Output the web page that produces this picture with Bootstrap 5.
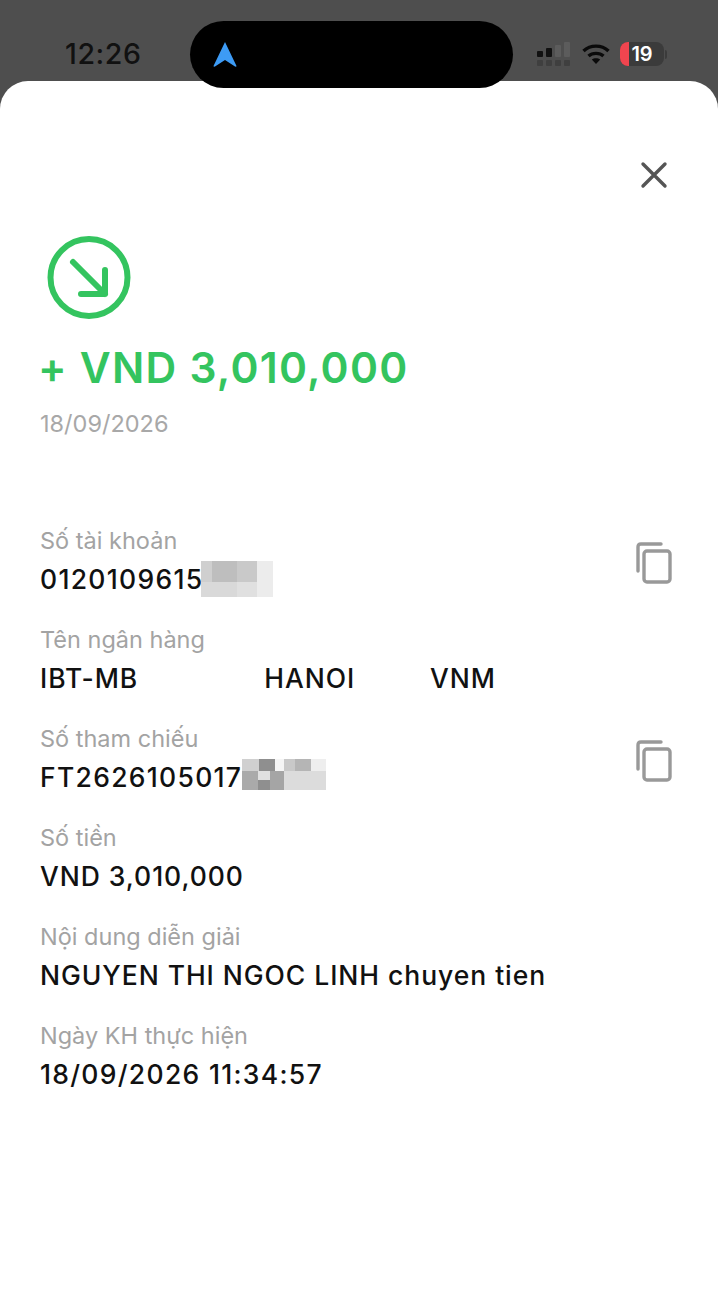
<!DOCTYPE html>
<html lang="vi">
<head>
  <meta charset="UTF-8">
  <title>Chi tiết giao dịch</title>
  <link href="https://cdn.jsdelivr.net/npm/bootstrap@5.3.0/dist/css/bootstrap.min.css" rel="stylesheet">
  <style>
    html, body { height: 1302px; overflow: hidden; }
    body { background: #4e4e4e; font-family: Inter, "Noto Sans", sans-serif; color: #111; }
    .status-bar { height: 81px; padding: 34px 51px 0 65px; position: relative; }
    .status-time { font-size: 28.500px; line-height: 40px; font-weight: 500; color: #111; width: 125px; letter-spacing: .6px; }
    .island { position: absolute; left: 190px; top: 21px; width: 323px; height: 67px; background: #000; border-radius: 34px; z-index: 2; }
    .island svg { position: absolute; left: 22px; top: 20px; }
    .status-icons { margin-left: auto; height: 40px; }
    .sig-icon { margin-right: 11px; }
    .wifi-icon { margin-right: 10px; }
    .batt { width: 44px; height: 24px; border-radius: 8px; background: #3b3b3b; overflow: hidden; color: #fff; font-size: 20px; font-weight: 600; line-height: 24px; text-align: center; position: relative; }
    .batt::before { content: ""; position: absolute; left: 0; top: 0; bottom: 0; width: 9px; background: #f0454f; }
    .batt-nub { width: 2px; height: 9px; margin-left: 1px; background: #3b3b3b; border-radius: 0 2px 2px 0; }
    .sheet { background: #fff; border-radius: 28px 28px 0 0; height: 1221px; padding: 0 40px; }
    .close-row { padding-top: 80px; padding-right: 10px; height: 155px; }
    .tx-amount { font-size: 42.500px; line-height: 50px; font-weight: 600; color: #34c45f; margin: 0 0 0 -2px; letter-spacing: 1.250px; }
    .tx-date { font-size: 23.500px; line-height: 30px; color: #a8a8a8; margin-top: 16px; }
    .tx-icon { height: 84px; margin-left: 7px; margin-bottom: 23px; }
    .info-list { margin-top: 87px; }
    .info-row { height: 99px; padding-right: 5px; }
    .info-label { font-size: 23.500px; line-height: 30px; color: #a3a3a3; }
    .info-value { font-size: 26.500px; line-height: 38px; font-weight: 500; color: #111; white-space: nowrap; letter-spacing: .95px; margin-top: 4px; }
    .info-value.info-nums { letter-spacing: 1.300px; }
    .bank-gap-1 { margin-left: 126px; }
    .bank-gap-2 { margin-left: 75px; }
    .mosaic { vertical-align: top; }
    .copy-icon { margin-top: 16px; }
  </style>
</head>
<body>
  <div class="status-bar d-flex">
    <div class="status-time">12:26</div>
    <div class="island">
      <svg width="26" height="27" viewBox="0 0 26 27"><path d="M13 1 L24.500 25 Q24.500 26 23 25.500 L13 19 L3 25.500 Q1.500 26 1.500 25 Z" fill="#3d9bf5"/></svg>
    </div>
    <div class="status-icons d-flex align-items-center">
      <svg class="sig-icon" width="34" height="24" viewBox="0 0 34 24">
        <rect x="0" y="9" width="6" height="6" rx="1" fill="#111"/>
        <rect x="9" y="6" width="6" height="9" rx="1" fill="#111"/>
        <rect x="18" y="3" width="6" height="12" rx="1" fill="#5c5c5c"/>
        <rect x="27" y="0" width="6" height="15" rx="1" fill="#5c5c5c"/>
        <rect x="0" y="18" width="6" height="6" rx="1" fill="#3f3f3f"/>
        <rect x="9" y="18" width="6" height="6" rx="1" fill="#3f3f3f"/>
        <rect x="18" y="18" width="6" height="6" rx="1" fill="#3f3f3f"/>
        <rect x="27" y="18" width="6" height="6" rx="1" fill="#3f3f3f"/>
      </svg>
      <svg class="wifi-icon" width="28" height="20" viewBox="0 0 28 20" fill="none" stroke="#0a0a0a" stroke-width="3.400">
        <path d="M1.500 7 C8.500 .5 19.500 .5 26.500 7"/>
        <path d="M6.500 12 C10.500 8.500 17.500 8.500 21.500 12"/>
        <path d="M14 20 L9.800 15.500 C12 13.700 16 13.700 18.200 15.500 Z" fill="#0a0a0a" stroke="none"/>
      </svg>
      <div class="batt">19</div>
      <div class="batt-nub"></div>
    </div>
  </div>

  <div class="sheet">
    <div class="close-row d-flex justify-content-end align-items-start">
      <svg width="28" height="28" viewBox="0 0 28 28" stroke="#555" stroke-width="3.400" stroke-linecap="round"><path d="M3 3 L25 25 M25 3 L3 25"/></svg>
    </div>
    <div class="tx-icon">
      <svg width="84" height="84" viewBox="0 0 84 84" fill="none" stroke="#34c45f" stroke-width="6" stroke-linecap="round" stroke-linejoin="round">
        <circle cx="42" cy="41.500" r="38.500"/>
        <path d="M26 26 L58 58 M58 34 L58 58 L34 58"/>
      </svg>
    </div>
    <h1 class="tx-amount">+ VND 3,010,000</h1>
    <div class="tx-date">18/09/2026</div>

    <div class="info-list">
      <div class="info-row d-flex justify-content-between">
        <div>
          <div class="info-label">Số tài khoản</div>
          <div class="info-value info-nums">012010961<span class="d-inline-block position-relative">5<svg class="position-absolute mosaic" width="72" height="36" viewBox="0 0 72 36" style="left:15px;top:1px">
            <rect width="72" height="36" fill="#d9d9d9"/>
            <rect width="11" height="21" fill="#cfcfcf"/>
            <rect x="11" width="25" height="21" fill="#bebebe"/>
            <rect x="36" width="20" height="21" fill="#c9c9c9"/>
            <rect x="56" width="16" height="36" fill="#ececec"/>
            <rect x="36" y="21" width="20" height="15" fill="#e0e0e0"/>
          </svg></span></div>
        </div>
        <svg class="copy-icon" width="38" height="42" viewBox="0 0 38 42" fill="none" stroke="#999" stroke-width="3.400" stroke-linejoin="round" stroke-linecap="round">
          <path d="M3 29 V5 Q3 2 6 2 H26"/>
          <rect x="9" y="9" width="26" height="31" rx="3"/>
        </svg>
      </div>
      <div class="info-row d-flex">
        <div>
          <div class="info-label">Tên ngân hàng</div>
          <div class="info-value">IBT-MB<span class="bank-gap-1">HANOI</span><span class="bank-gap-2">VNM</span></div>
        </div>
      </div>
      <div class="info-row d-flex justify-content-between">
        <div>
          <div class="info-label">Số tham chiếu</div>
          <div class="info-value info-nums">FT262610501<span class="d-inline-block position-relative">7<svg class="position-absolute mosaic" width="84" height="31" viewBox="0 0 84 31" style="left:16px;top:1px">
            <rect width="84" height="31" fill="#dcdcdc"/>
            <rect width="17" height="12" fill="#d0d0d0"/>
            <rect x="17" width="16" height="12" fill="#8f8f8f"/>
            <rect x="33" width="9" height="12" fill="#f5f5f5"/>
            <rect x="42" width="11" height="12" fill="#c9c9c9"/>
            <rect x="53" width="16" height="12" fill="#b5b5b5"/>
            <rect x="69" width="15" height="12" fill="#eee"/>
            <rect y="12" width="16" height="19" fill="#aaa"/>
            <rect x="16" y="12" width="12" height="9" fill="#e0e0e0"/>
            <rect x="16" y="21" width="12" height="10" fill="#8f8f8f"/>
            <rect x="28" y="12" width="14" height="19" fill="#a5a5a5"/>
          </svg></span></div>
        </div>
        <svg class="copy-icon" width="38" height="42" viewBox="0 0 38 42" fill="none" stroke="#999" stroke-width="3.400" stroke-linejoin="round" stroke-linecap="round">
          <path d="M3 29 V5 Q3 2 6 2 H26"/>
          <rect x="9" y="9" width="26" height="31" rx="3"/>
        </svg>
      </div>
      <div class="info-row">
        <div class="info-label">Số tiền</div>
        <div class="info-value">VND 3,010,000</div>
      </div>
      <div class="info-row">
        <div class="info-label">Nội dung diễn giải</div>
        <div class="info-value">NGUYEN THI NGOC LINH chuyen tien</div>
      </div>
      <div class="info-row">
        <div class="info-label">Ngày KH thực hiện</div>
        <div class="info-value info-nums">18/09/2026 11:34:57</div>
      </div>
    </div>
  </div>
  <script src="https://cdn.jsdelivr.net/npm/bootstrap@5.3.0/dist/js/bootstrap.bundle.min.js"></script>
</body>
</html>
